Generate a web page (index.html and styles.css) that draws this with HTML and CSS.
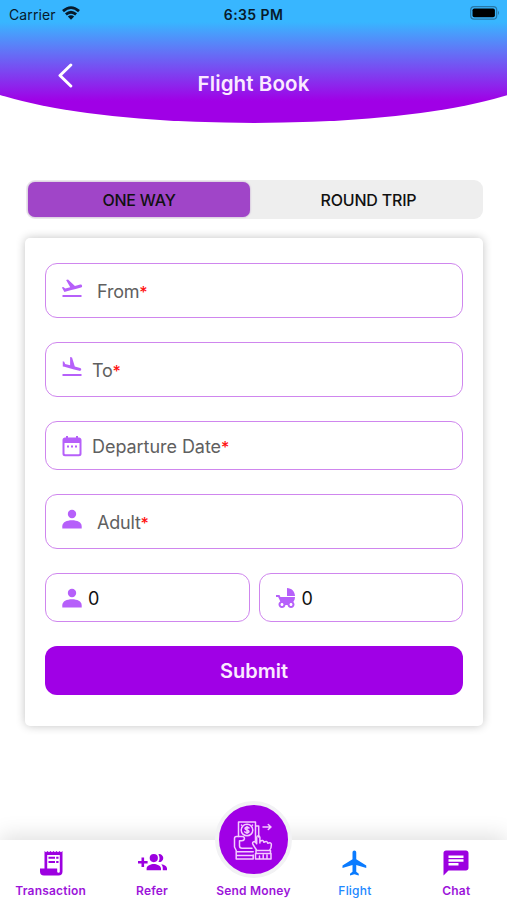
FILE: index.html
```html
<!DOCTYPE html>
<html lang="en">
<head>
<meta charset="utf-8">
<title>Flight Book</title>
<link rel="stylesheet" href="styles.css">
</head>
<body>
<header class="header">
  <div class="header-curve">
    <div class="status">
      <div class="carrier"><span>Carrier</span>
        <svg width="18" height="14" viewBox="0 0 18 14" fill="none" stroke="#071a2b" stroke-width="2.8"><path d="M1 5.1Q9-1.9 17 5.1M3.9 8.4Q9 4 14.1 8.4"/><path d="M5.8 10.5Q9 7.8 12.2 10.5L9 13.7Z" fill="#071a2b" stroke="none"/></svg>
      </div>
      <div class="clock">6:35 PM</div>
      <svg class="battery" width="30" height="14" viewBox="0 0 30 14"><rect x=".7" y=".7" width="26" height="12.4" rx="3.4" fill="none" stroke="#2878a8" stroke-width="1.2"/><rect x="2.5" y="2.5" width="22.4" height="8.8" rx="1.8" fill="#000"/><path d="M28 4.8q2 2.1 0 4.2z" fill="#2878a8"/></svg>
    </div>
    <div class="titlebar">
      <svg class="back" width="16" height="26" viewBox="0 0 16 26" fill="none" stroke="#fff" stroke-width="3" stroke-linecap="round" stroke-linejoin="round"><path d="M13.8 2 3 12.5 13.8 23"/></svg>
      <h1>Flight Book</h1>
    </div>
  </div>
</header>

<main>
  <div class="tabs"><button class="tab active">ONE WAY</button><button class="tab">ROUND TRIP</button></div>
  <form class="card">
    <div class="field tall">
      <svg class="icon" viewBox="0 0 24 24"><path d="M2.5 19h19v2h-19zm19.57-9.36c-.21-.8-1.04-1.28-1.84-1.06L14.92 10l-6.9-6.43-1.93.51 4.14 7.17-4.97 1.33-1.97-1.54-1.45.39 2.59 4.49 1.6-.43 5.31-1.42 4.35-1.16L21 11.49c.81-.23 1.28-1.05 1.07-1.85z"/></svg>
      <span class="label indent">From<b>*</b></span>
    </div>
    <div class="field tall">
      <svg class="icon" viewBox="0 0 24 24"><path d="M2.5 19h19v2h-19zm7.18-5.73 4.35 1.16 5.31 1.42c.8.21 1.62-.26 1.84-1.06.21-.8-.26-1.62-1.06-1.84l-5.31-1.42-2.76-9.02L10.12 2v8.28L5.15 8.95l-.93-2.32-1.45-.39v5.17l1.6.43z"/></svg>
      <span class="label">To<b>*</b></span>
    </div>
    <div class="field">
      <svg class="icon" viewBox="0 0 24 24"><path fill-rule="evenodd" d="M9 11.5H7v2h2zm4 0h-2v2h2zm4 0h-2v2h2zM19 3.5h-1V2h-2v1.500H8V2H6v1.500H5c-1.400 0-2.500 1.100-2.500 2.500v14c0 1.300 1.100 2.300 2.500 2.300h14c1.400 0 2.500-1 2.500-2.300V6c0-1.400-1.100-2.500-2.500-2.500zm.5 16c0 .5-.3.800-.8.800H5.300c-.5 0-.8-.3-.8-.8V9h15z"/></svg>
      <span class="label date">Departure Date<b>*</b></span>
    </div>
    <div class="field tall">
      <svg class="icon" viewBox="0 0 24 24"><circle cx="12" cy="7" r="4.200"/><path d="M2.300 21.500v-2.300c0-4 4.400-6 9.700-6s9.700 2 9.700 6v2.300z"/></svg>
      <span class="label indent">Adult<b>*</b></span>
    </div>
    <div class="row">
      <div class="field">
        <svg class="icon" viewBox="0 0 24 24"><circle cx="12" cy="7" r="4.200"/><path d="M2.300 21.500v-2.300c0-4 4.400-6 9.700-6s9.700 2 9.700 6v2.300z"/></svg>
        <span class="count">0</span>
      </div>
      <div class="field">
        <svg class="icon" viewBox="0 0 24 24"><path fill-rule="evenodd" d="M13 2v8h8c0-4.42-3.58-8-8-8zm6.32 13.89C20.37 14.54 21 12.84 21 11H6.44l-.95-2H2v2h2.22s1.89 4.07 2.12 4.42c-1.1.59-1.84 1.75-1.84 3.08C4.5 20.43 6.07 22 8 22c1.76 0 3.22-1.3 3.46-3h2.08c.24 1.7 1.7 3 3.46 3 1.93 0 3.5-1.57 3.5-3.5 0-1.04-.46-1.97-1.18-2.61zM8 20c-.83 0-1.5-.67-1.5-1.5S7.17 17 8 17s1.5.67 1.5 1.5S8.83 20 8 20zm9 0c-.83 0-1.5-.67-1.5-1.5S16.17 17 17 17s1.5.67 1.5 1.5S17.83 20 17 20z"/></svg>
        <span class="count">0</span>
      </div>
    </div>
    <button class="submit" type="button">Submit</button>
  </form>
</main>

<nav class="nav">
  <div class="item">
    <svg viewBox="0 0 30 30"><path fill-rule="evenodd" d="M8.500 3l1.500 1.300L11.500 3l1.500 1.300L14.500 3l1.500 1.300L17.500 3l1.500 1.300L20.500 3l1.500 1.300L23.500 3l1.500 1.300L26.500 3v20.500a4 4 0 0 1-4 4H8a4 4 0 0 1-4-4V20.500h4.500zM11.200 7v13.500h10v3a1.300 1.300 0 0 0 2.600 0V7z"/><path d="M12.500 8.800h6.500v2h-6.500zM20.200 8.800h2.300v2h-2.300zM12.500 13h6.500v2h-6.500zM20.200 13h2.300v2h-2.300z"/></svg>
    <span>Transaction</span>
  </div>
  <div class="item">
    <svg viewBox="0 0 30 30"><path d="M4.500 9.500h2.600v3.500h3.500v2.600H7.100v3.500H4.500v-3.500H1v-2.600h3.500z"/><circle cx="16.800" cy="10.100" r="4.100"/><path d="M9.600 22.200v-1.700c0-3.100 4.500-4.600 7.200-4.600s7.200 1.500 7.200 4.600v1.700zM21.400 6.200a4 4 0 1 1 0 7.800c1.500-2.500 1.500-5.300 0-7.800zM24.300 16.200c3.100.5 5.700 1.800 5.700 4.400v1.600h-4.200v-1.700c0-1.800-.5-3.200-1.500-4.300z"/></svg>
    <span>Refer</span>
  </div>
  <div class="item">
    <div class="send">
      <svg viewBox="0 0 42 42" fill="none" stroke="#f4ccff" stroke-width="1.500" stroke-linejoin="round" stroke-linecap="round"><path d="M6.500 17.500V3h17v19M23.500 7h3.200v11M9.500 6v.2M20.500 6v.2"/><circle cx="15" cy="11" r="5.800"/><path d="M17 9c-.7-1.200-4-1.200-4 .5 0 1.800 4 1.100 4 3 0 1.600-3.300 1.700-4.200.3M15 7.500v7M31 8h8m-2.700-2.500L39 8l-2.700 2.500"/><path d="M6.500 17.500H4.500q-2 0-2 2v8.500l1.700 3.500V40h17v-4M6.500 17.500h4.200q2 .5 1.700 2.500-.4 1.700-2.500 1.700H7.500v5q0 2.500 2.500 2.500h10M4.200 32.800h17M4.200 36.500h17"/><path d="M24.500 31l-3.500-5.500c-1.300-2.400 1.400-3.800 2.800-2l.9 1.300V18.500q0-1.800 1.600-1.800t1.600 1.800v5.500m0-1.500q3.400-2.500 4 .8 3.200-2 3.800.9 3.700-1.500 3.700 1.600 0 3.700-2 5.700M24 31.500h14.500M24 31.500v3M38.500 31.500v3M23.500 34.500h15.500V40H23.500zM27.500 37v3M31.200 36v4M35 36v4"/></svg>
    </div>
    <span>Send Money</span>
  </div>
  <div class="item current">
    <svg viewBox="0 0 24 24"><path d="M21 16v-2l-8-5V3.500c0-.83-.67-1.500-1.500-1.500S10 2.670 10 3.500V9l-8 5v2l8-2.500V19l-2 1.500V22l3.500-1 3.500 1v-1.500L13 19v-5.500z"/></svg>
    <span>Flight</span>
  </div>
  <div class="item">
    <svg viewBox="0 0 24 24"><path fill-rule="evenodd" d="M20 2H4c-1.100 0-2 .9-2 2v18l4-4h14c1.100 0 2-.9 2-2V4c0-1.100-.9-2-2-2zM6 9h12v2H6zm8 5H6v-2h8zm4-6H6V6h12z"/></svg>
    <span>Chat</span>
  </div>
</nav>
</body>
</html>
```
FILE: styles.css
```css
* { box-sizing: border-box; }
body {
  margin: 0;
  height: 900px;
  display: flex;
  flex-direction: column;
  overflow: hidden;
  background: #fff;
  font-family: Inter, "Liberation Sans", sans-serif;
}
button { border: 0; padding: 0; font-family: inherit; color: #000; }
svg { display: block; flex: none; }

.header { height: 123px; overflow: hidden; flex: none; }
.header-curve {
  width: 600px;
  height: 123px;
  margin-left: -46.5px;
  padding: 0 46.5px;
  border-radius: 0 0 50% 50% / 0 0 60px 60px;
  background: linear-gradient(#38b6ff 22px, #5b80f8 46px, #7f40f0 74px, #a000e6 101px);
}
.status {
  height: 28px;
  display: grid;
  grid-template-columns: 1fr auto 1fr;
  align-items: center;
  padding: 0 7px 0 9px;
  color: #071a2b;
}
.carrier { display: flex; align-items: center; gap: 6px; font-size: 14px; letter-spacing: .1px; }
.carrier svg { margin-top: -2px; }
.clock { margin-right: 2px; font-size: 14px; font-weight: 600; letter-spacing: .4px; }
.battery { justify-self: end; margin-top: -2px; }
.titlebar {
  display: grid;
  grid-template-columns: 1fr auto 1fr;
  padding-top: 35px;
}
.back { margin-left: 57px; }
h1 { margin: 8px 0 0; font-size: 20.5px; line-height: 26px; font-weight: 600; color: #fbeaff; letter-spacing: .1px; }

main { padding: 57px 24px 0 25px; flex: 1; }
.tabs {
  height: 39px;
  display: flex;
  padding: 2px;
  margin-left: 1px;
  border-radius: 9px;
  background: #eee;
}
.tab { flex: 1; padding-left: 6px; background: none; font-size: 16px; font-weight: 500; color: #111; letter-spacing: -.2px; }
.tab.active { flex: 0 0 222px; padding: 0; border-radius: 7px; background: #a045c8; box-shadow: 0 0 2px #b58cc8; }
.card {
  height: 488px;
  margin-top: 19px;
  padding: 25px 20px 0;
  display: flex;
  flex-direction: column;
  gap: 24px;
  border-radius: 5px;
  background: #fff;
  box-shadow: 0 0 10px rgba(0, 0, 0, .24);
}
.field {
  height: 49px;
  flex: none;
  display: flex;
  align-items: center;
  padding-left: 14px;
  border: 1px solid #cf86ee;
  border-radius: 12px;
}
.field.tall { height: 55px; }
.icon { width: 24px; height: 24px; fill: #b660fa; }
.tall .icon { margin-bottom: 6px; }
.label { margin: 1px 0 0 8px; font-size: 18px; color: #606060; letter-spacing: -.2px; }
.label.indent { margin-left: 13px; }
.label.date { letter-spacing: -.05px; }
.label b { color: #f11; font-size: 16px; font-weight: 500; }
.count { margin: 1px 0 0 4px; font-size: 18px; color: #111; }
.row { display: grid; grid-template-columns: 1fr 1fr; gap: 9px; }
.submit {
  height: 49px;
  flex: none;
  border-radius: 12px;
  background: #a000e6;
  color: #fbeaff;
  font-size: 20px;
  font-weight: 600;
}

.nav {
  height: 60px;
  flex: none;
  display: grid;
  grid-template-columns: repeat(5, 1fr);
  background: #fff;
  box-shadow: 0 -4px 22px rgba(0, 0, 0, .13);
}
.item {
  height: 60px;
  display: flex;
  flex-direction: column;
  align-items: center;
  justify-content: flex-end;
  color: #9c14da;
  fill: #9c00e0;
  font-size: 12px;
  font-weight: 600;
  line-height: 15px;
  padding-bottom: 2px;
  letter-spacing: .2px;
}
.item > svg { width: 30px; height: 30px; margin-bottom: 5px; }
.item.current { color: #2188ff; fill: #0a7bff; font-weight: 500; }
.send {
  width: 77px;
  height: 77px;
  flex: none;
  margin-bottom: 5px;
  display: grid;
  place-items: center;
  border: 4px solid #f2f2f4;
  border-radius: 50%;
  background: #a000e6;
}
.send svg { width: 42px; height: 42px; }
```
